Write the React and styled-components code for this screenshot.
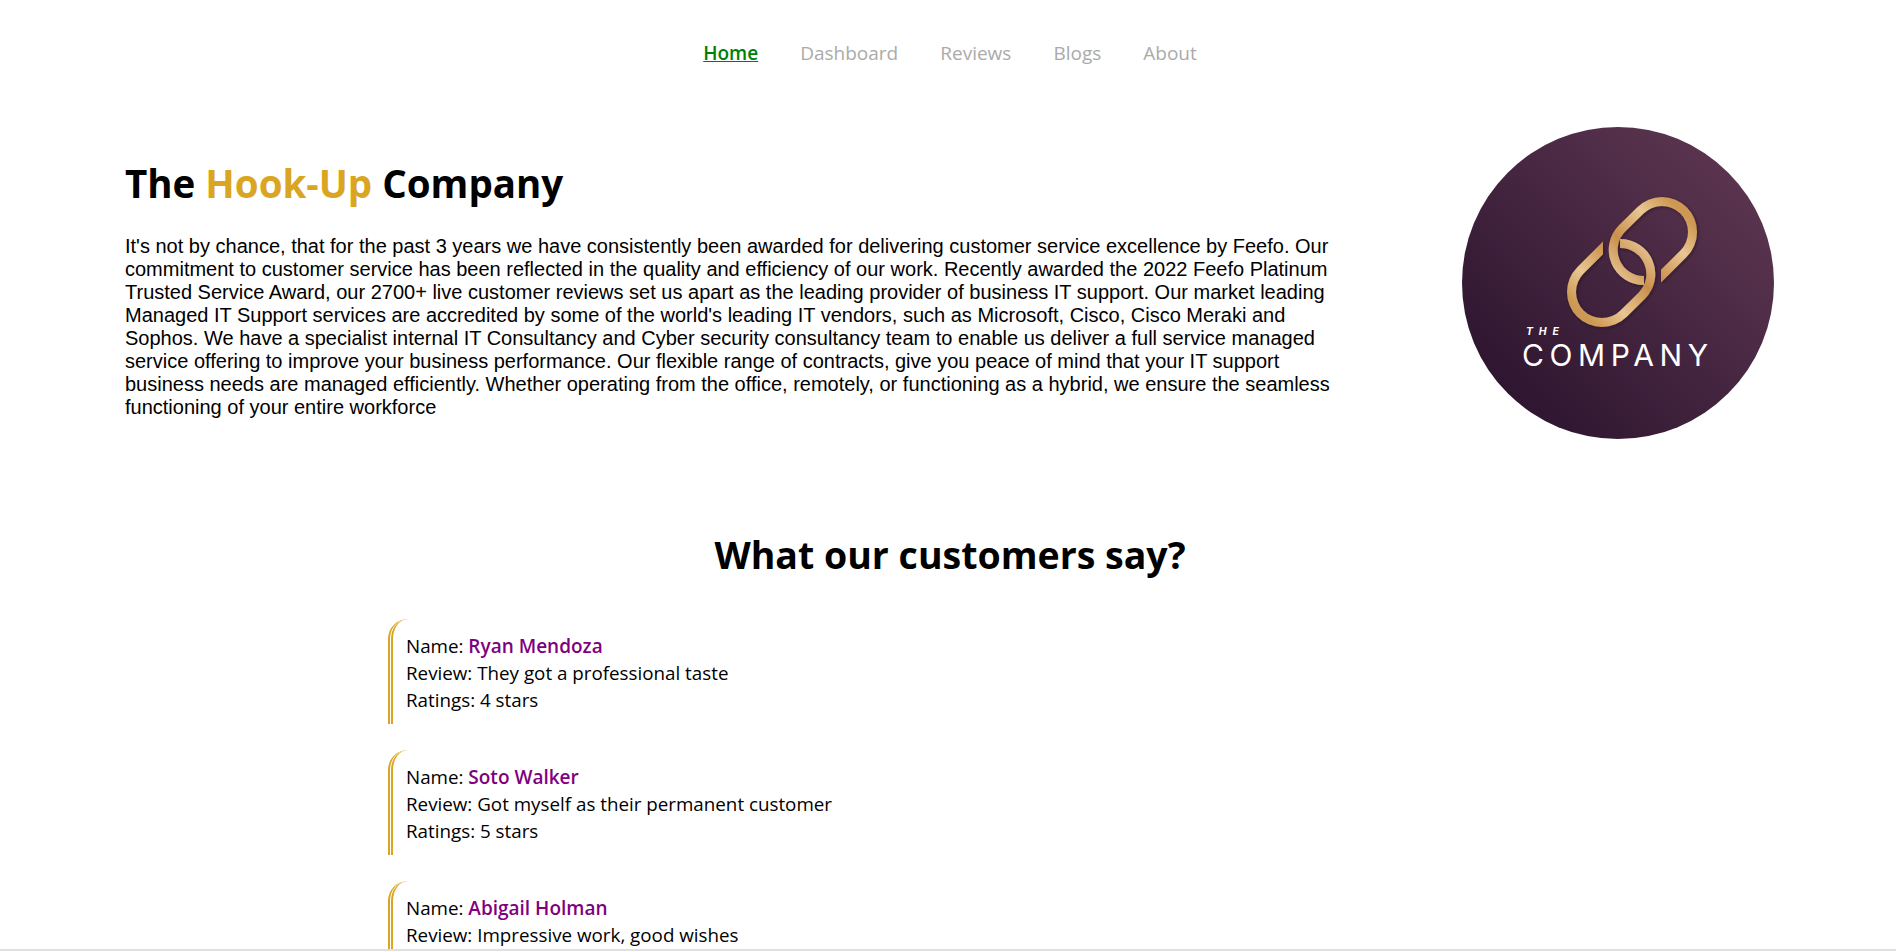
import styled, { createGlobalStyle } from "styled-components";

const reviews = [
    { name: "Ryan Mendoza", review: "They got a professional taste", ratings: 4 },
    { name: "Soto Walker", review: "Got myself as their permanent customer", ratings: 5 },
    { name: "Abigail Holman", review: "Impressive work, good wishes", ratings: 5 },
];

const navItems = ["Dashboard", "Reviews", "Blogs", "About"];

// one chain link, drawn around the middle of the pair; the second one is the same shape turned 180deg
const linkPath = "M29 20.6 L54.75 -5.25 A35 35 0 0 0 5.25 -54.75 L-13.05 -36.75 A35 35 0 0 0 12 23 L12 14 A26 26 0 0 1 -6.7 -30.4 L11.6 -48.4 A26 26 0 0 1 48.4 -11.6 L29 7.8 Z";

const Logo = () => (
    <LogoSvg viewBox="0 0 312 312">
        <defs>
            <linearGradient id="plum" x1="0.85" y1="0.15" x2="0.15" y2="0.85">
                <stop offset="0" stopColor="#5a344f" />
                <stop offset="1" stopColor="#2f1630" />
            </linearGradient>
            <linearGradient id="gold" x1="-50" y1="50" x2="50" y2="-50" gradientUnits="userSpaceOnUse">
                <stop offset="0" stopColor="#cc9350" />
                <stop offset="0.28" stopColor="#eed4a8" />
                <stop offset="0.55" stopColor="#c98f4c" />
                <stop offset="0.8" stopColor="#e9c692" />
                <stop offset="1" stopColor="#cc9852" />
            </linearGradient>
            <filter id="soft" x="-20%" y="-20%" width="140%" height="140%">
                <feDropShadow dx="1" dy="1" stdDeviation="1.5" floodColor="#1c0a1c" floodOpacity="0.6" />
            </filter>
        </defs>
        <circle cx="156" cy="156" r="156" fill="url(#plum)" />
        <g transform="translate(170 135)" fill="url(#gold)" filter="url(#soft)">
            <path d={linkPath} />
            <path d={linkPath} transform="rotate(180)" />
        </g>
        <text x="64" y="208" fill="#fff" fontFamily="Inter, sans-serif" fontSize="10.5" fontStyle="italic" fontWeight="700" textLength="33">THE</text>
        <text x="60" y="239" fill="#fff" fontFamily="Inter, sans-serif" fontSize="30" fontWeight="400" textLength="186">COMPANY</text>
    </LogoSvg>
);

const App = () => {
    return (
        <>
            <GlobalStyle />
            <Nav>
                <NavLink $active>Home</NavLink>
                {navItems.map((item) => (
                    <NavLink key={item}>{item}</NavLink>
                ))}
            </Nav>
            <Hero>
                <Intro>
                    <Title>
                        The <Gold>Hook-Up</Gold> Company
                    </Title>
                    <Blurb>
                        It's not by chance, that for the past 3 years we have consistently been awarded for delivering customer service excellence by Feefo. Our commitment to customer service has been reflected in the quality and efficiency of our work. Recently awarded the 2022 Feefo Platinum Trusted Service Award, our 2700+ live customer reviews set us apart as the leading provider of business IT support. Our market leading Managed IT Support services are accredited by some of the world's leading IT vendors, such as Microsoft, Cisco, Cisco Meraki and Sophos. We have a specialist internal IT Consultancy and Cyber security consultancy team to enable us deliver a full service managed service offering to improve your business performance. Our flexible range of contracts, give you peace of mind that your IT support business needs are managed efficiently. Whether operating from the office, remotely, or functioning as a hybrid, we ensure the seamless functioning of your entire workforce
                    </Blurb>
                </Intro>
                <Logo />
            </Hero>
            <Customers>
                <SectionTitle>What our customers say?</SectionTitle>
                <ReviewList>
                    {reviews.map((r) => (
                        <Review key={r.name}>
                            <div>Name: <Customer>{r.name}</Customer></div>
                            <div>Review: {r.review}</div>
                            <div>Ratings: {r.ratings} stars</div>
                        </Review>
                    ))}
                </ReviewList>
            </Customers>
            <BottomEdge />
        </>
    );
};

const GlobalStyle = createGlobalStyle`
    html, body {
        margin: 0;
        background: #fff;
        color: #000;
        overflow: hidden;
        height: 951px;
    }
    body {
        font-family: "Open Sans", sans-serif;
    }
`;

const Nav = styled.nav`
    display: flex;
    justify-content: center;
    gap: 42px;
    padding: 39px 0 0 4px;
    height: 67px;
    font-size: 19px;
    line-height: 28px;
`;

const NavLink = styled.a`
    color: ${(p) => (p.$active ? "green" : "#aaa")};
    font-weight: ${(p) => (p.$active ? 600 : 400)};
    text-decoration: ${(p) => (p.$active ? "underline" : "none")};
    cursor: pointer;
`;

const Hero = styled.section`
    display: flex;
    justify-content: space-between;
    padding: 21px 122px 0 125px;
`;

const Intro = styled.div`
    width: 1210px;
    padding-top: 30px;
`;

const Title = styled.h1`
    margin: 0 0 26px;
    font-size: 38.5px;
    line-height: 52px;
    font-weight: 700;
`;

const Gold = styled.span`
    color: goldenrod;
`;

const Blurb = styled.p`
    margin: 0;
    font-family: "Liberation Sans", Arial, sans-serif;
    font-size: 20px;
    line-height: 23px;
`;

const LogoSvg = styled.svg`
    width: 312px;
    height: 312px;
    flex: none;
`;

const Customers = styled.section`
    padding: 90px 0 0 388px;
`;

const SectionTitle = styled.h2`
    margin: 0 0 38px;
    padding-right: 384px;
    text-align: center;
    font-size: 37.5px;
    line-height: 52px;
    font-weight: 700;
`;

const ReviewList = styled.div`
    display: flex;
    flex-direction: column;
    gap: 26px;
`;

const Review = styled.article`
    border-left: 5px double goldenrod;
    border-top-left-radius: 20px;
    padding: 14px 0 10px 13px;
    font-size: 18.8px;
    line-height: 27px;
`;

const Customer = styled.span`
    color: purple;
    font-weight: 600;
    font-size: 19px;
`;

const BottomEdge = styled.div`
    position: fixed;
    left: 0;
    right: 0;
    bottom: 0;
    height: 2px;
    background: #e0e0e0;
`;

export default App;
